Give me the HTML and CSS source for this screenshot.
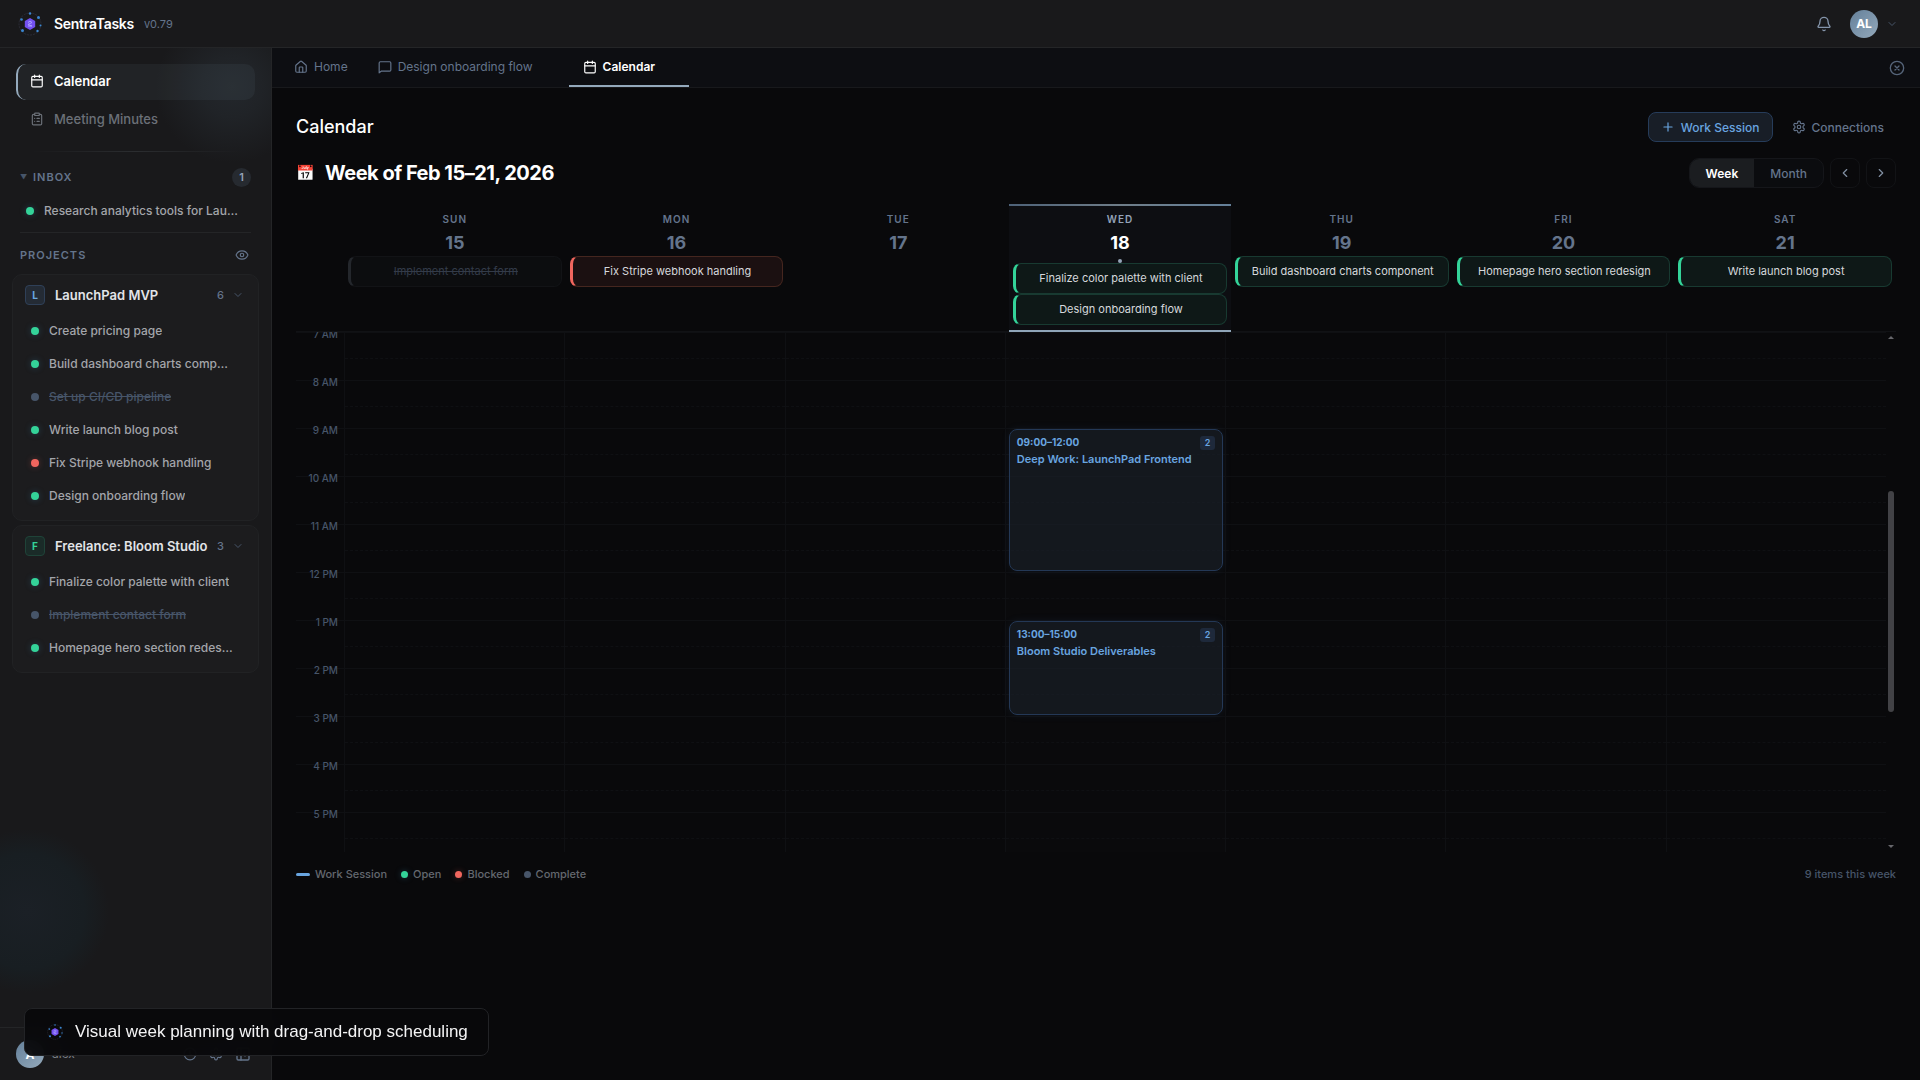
FILE: index.html
```html
<!DOCTYPE html>
<html lang="en">
<head>
  <meta charset="UTF-8" />
  <meta name="viewport" content="width=device-width, initial-scale=1.0"/>
  <title>SentraTasks - Calendar</title>
  <link rel="stylesheet" href="styles.css">
</head>
<body>
  <!-- shared icons -->
  <svg class="sprite" aria-hidden="true">
    <symbol id="i-logo" viewBox="0 0 24 24">
      <circle cx="12" cy="12" r="11" fill="none" stroke="#2c2d38" stroke-width="1" stroke-dasharray="2 1"/>
      <path d="M12 6l5.2 3v6L12 18l-5.2-3V9z" fill="#7350f0"/>
      <path d="M10 10.500l2-1.500 2 1.500-4 2 4 1.500h-4" fill="none" stroke="#a9a0ff" stroke-width="1"/>
      <g fill="#3a86d0">
        <circle cx="12" cy="1.500" r="1.200"/><circle cx="20.500" cy="5.500" r="1.500"/><circle cx="22.500" cy="13.500" r="1"/>
        <circle cx="19.500" cy="19" r="1.200"/><circle cx="4.500" cy="18.500" r="1.500"/><circle cx="3.500" cy="7.500" r="1.300"/>
      </g>
    </symbol>
    <symbol id="i-calendar" viewBox="0 0 24 24"><path d="M8 2v4M16 2v4M3 10h18"/><rect x="3" y="4" width="18" height="18" rx="2"/></symbol>
    <symbol id="i-clipboard" viewBox="0 0 24 24"><rect x="8" y="2" width="8" height="4" rx="1"/><path d="M16 4h2a2 2 0 0 1 2 2v14a2 2 0 0 1-2 2H6a2 2 0 0 1-2-2V6a2 2 0 0 1 2-2h2M12 11h4M12 16h4M8 11h.01M8 16h.01"/></symbol>
    <symbol id="i-home" viewBox="0 0 24 24"><path d="M15 21v-8a1 1 0 0 0-1-1h-4a1 1 0 0 0-1 1v8"/><path d="M3 10a2 2 0 0 1 .709-1.528l7-6a2 2 0 0 1 2.582 0l7 6A2 2 0 0 1 21 10v9a2 2 0 0 1-2 2H5a2 2 0 0 1-2-2z"/></symbol>
    <symbol id="i-message" viewBox="0 0 24 24"><path d="M22 17a2 2 0 0 1-2 2H6l-4 3V5a2 2 0 0 1 2-2h16a2 2 0 0 1 2 2z"/></symbol>
    <symbol id="i-bell" viewBox="0 0 24 24"><path d="M10.268 21a2 2 0 0 0 3.464 0M3.262 15.326A1 1 0 0 0 4 17h16a1 1 0 0 0 .740-1.673C19.410 13.956 18 12.499 18 8A6 6 0 0 0 6 8c0 4.499-1.411 5.956-2.738 7.326"/></symbol>
    <symbol id="i-down" viewBox="0 0 24 24"><path d="M6 9l6 6 6-6"/></symbol>
    <symbol id="i-left" viewBox="0 0 24 24"><path d="M15 18l-6-6 6-6"/></symbol>
    <symbol id="i-right" viewBox="0 0 24 24"><path d="M9 18l6-6-6-6"/></symbol>
    <symbol id="i-plus" viewBox="0 0 24 24"><path d="M5 12h14M12 5v14"/></symbol>
    <symbol id="i-close" viewBox="0 0 24 24"><circle cx="12" cy="12" r="10"/><path d="M15 9l-6 6M9 9l6 6"/></symbol>
    <symbol id="i-eye" viewBox="0 0 24 24"><path d="M2.062 12.348a1 1 0 0 1 0-.696 10.750 10.750 0 0 1 19.876 0 1 1 0 0 1 0 .696 10.750 10.750 0 0 1-19.876 0"/><circle cx="12" cy="12" r="3"/></symbol>
    <symbol id="i-help" viewBox="0 0 24 24"><circle cx="12" cy="12" r="10"/><path d="M12 6v6l3 2"/></symbol>
    <symbol id="i-panel" viewBox="0 0 24 24"><rect x="3" y="3" width="18" height="18" rx="2"/><path d="M9 3v18M15 9l-2 3 2 3"/></symbol>
    <symbol id="i-gear" viewBox="0 0 24 24"><path d="M12.220 2h-.440a2 2 0 0 0-2 2v.180a2 2 0 0 1-1 1.730l-.430.250a2 2 0 0 1-2 0l-.150-.080a2 2 0 0 0-2.730.730l-.220.380a2 2 0 0 0 .730 2.730l.150.100a2 2 0 0 1 1 1.720v.510a2 2 0 0 1-1 1.740l-.150.090a2 2 0 0 0-.730 2.730l.220.380a2 2 0 0 0 2.730.730l.150-.080a2 2 0 0 1 2 0l.430.250a2 2 0 0 1 1 1.730V20a2 2 0 0 0 2 2h.440a2 2 0 0 0 2-2v-.180a2 2 0 0 1 1-1.730l.430-.250a2 2 0 0 1 2 0l.150.080a2 2 0 0 0 2.730-.730l.220-.390a2 2 0 0 0-.730-2.730l-.150-.080a2 2 0 0 1-1-1.740v-.500a2 2 0 0 1 1-1.740l.150-.090a2 2 0 0 0 .730-2.730l-.220-.380a2 2 0 0 0-2.730-.730l-.150.080a2 2 0 0 1-2 0l-.430-.250a2 2 0 0 1-1-1.730V4a2 2 0 0 0-2-2z"/><circle cx="12" cy="12" r="3"/></symbol>
  </svg>

  <header class="topbar">
    <svg class="logo"><use href="#i-logo"/></svg>
    <span class="brand">SentraTasks</span>
    <span class="version">v0.79</span>
    <button class="bell" aria-label="Notifications"><svg class="icon icon-md"><use href="#i-bell"/></svg></button>
    <button class="account" aria-label="Account">
      <span class="avatar">AL</span>
      <svg class="icon icon-sm"><use href="#i-down"/></svg>
    </button>
  </header>

  <div class="shell">
    <aside class="sidebar">
      <nav class="side-nav">
        <a class="side-link active" href="#calendar"><svg class="icon"><use href="#i-calendar"/></svg>Calendar</a>
        <a class="side-link" href="#minutes"><svg class="icon"><use href="#i-clipboard"/></svg>Meeting Minutes</a>
      </nav>

      <section class="inbox">
        <h2 class="side-heading"><span class="caret">▼</span>INBOX<span class="count-badge">1</span></h2>
        <a class="task" href="#task"><span class="dot open"></span><span class="task-name">Research analytics tools for LaunchPad</span></a>
      </section>

      <h2 class="side-heading projects-heading">PROJECTS<button aria-label="Show completed"><svg class="icon"><use href="#i-eye"/></svg></button></h2>

      <section class="project">
        <button class="project-head"><span class="project-badge blue">L</span><span class="project-name">LaunchPad MVP</span><span class="project-count">6</span><svg class="icon icon-sm"><use href="#i-down"/></svg></button>
        <a class="task" href="#task"><span class="dot open"></span><span class="task-name">Create pricing page</span></a>
        <a class="task" href="#task"><span class="dot open"></span><span class="task-name">Build dashboard charts component</span></a>
        <a class="task done" href="#task"><span class="dot complete"></span><span class="task-name">Set up CI/CD pipeline</span></a>
        <a class="task" href="#task"><span class="dot open"></span><span class="task-name">Write launch blog post</span></a>
        <a class="task" href="#task"><span class="dot blocked"></span><span class="task-name">Fix Stripe webhook handling</span></a>
        <a class="task" href="#task"><span class="dot open"></span><span class="task-name">Design onboarding flow</span></a>
      </section>

      <section class="project">
        <button class="project-head"><span class="project-badge green">F</span><span class="project-name">Freelance: Bloom Studio</span><span class="project-count">3</span><svg class="icon icon-sm"><use href="#i-down"/></svg></button>
        <a class="task" href="#task"><span class="dot open"></span><span class="task-name">Finalize color palette with client</span></a>
        <a class="task done" href="#task"><span class="dot complete"></span><span class="task-name">Implement contact form</span></a>
        <a class="task" href="#task"><span class="dot open"></span><span class="task-name">Homepage hero section redesign</span></a>
      </section>

      <footer class="side-footer">
        <span class="avatar">A</span>
        <span class="user-name">alex</span>
        <button aria-label="Help"><svg class="icon"><use href="#i-help"/></svg></button>
        <button aria-label="Settings"><svg class="icon"><use href="#i-gear"/></svg></button>
        <button aria-label="Collapse sidebar"><svg class="icon icon-md"><use href="#i-panel"/></svg></button>
      </footer>
    </aside>

    <main class="main">
      <nav class="tabs">
        <a class="tab" href="#home"><svg class="icon"><use href="#i-home"/></svg>Home</a>
        <a class="tab closable" href="#task"><svg class="icon"><use href="#i-message"/></svg>Design onboarding flow</a>
        <a class="tab closable active" href="#calendar"><svg class="icon"><use href="#i-calendar"/></svg>Calendar</a>
        <button class="close-all" aria-label="Close all tabs"><svg class="icon icon-md"><use href="#i-close"/></svg></button>
      </nav>

      <div class="page">
        <div class="page-row">
          <h1 class="page-title">Calendar</h1>
          <button class="btn primary"><svg class="icon"><use href="#i-plus"/></svg>Work Session</button>
          <button class="btn"><svg class="icon"><use href="#i-gear"/></svg>Connections</button>
        </div>

        <div class="page-row week-row">
          <span class="week-icon">📅</span>
          <h2 class="week-title">Week of Feb 15–21, 2026</h2>
          <div class="segmented">
            <button class="active">Week</button>
            <button>Month</button>
          </div>
          <button class="nav-btn" aria-label="Previous week"><svg class="icon"><use href="#i-left"/></svg></button>
          <button class="nav-btn" aria-label="Next week"><svg class="icon"><use href="#i-right"/></svg></button>
        </div>

        <div class="week-head">
          <div class="day-head"><span class="day-name">SUN</span><span class="day-num">15</span><a class="chip complete" href="#task">Implement contact form</a></div>
          <div class="day-head"><span class="day-name">MON</span><span class="day-num">16</span><a class="chip blocked" href="#task">Fix Stripe webhook handling</a></div>
          <div class="day-head"><span class="day-name">TUE</span><span class="day-num">17</span></div>
          <div class="day-head today"><span class="day-name">WED</span><span class="day-num">18</span><span class="today-dot"></span><a class="chip" href="#task">Finalize color palette with client</a><a class="chip" href="#task">Design onboarding flow</a></div>
          <div class="day-head"><span class="day-name">THU</span><span class="day-num">19</span><a class="chip" href="#task">Build dashboard charts component</a></div>
          <div class="day-head"><span class="day-name">FRI</span><span class="day-num">20</span><a class="chip" href="#task">Homepage hero section redesign</a></div>
          <div class="day-head"><span class="day-name">SAT</span><span class="day-num">21</span><a class="chip" href="#task">Write launch blog post</a></div>
        </div>

        <div class="week-view">
          <div id="week-scroll" class="week-scroll">
            <div id="week-body" class="week-body"></div>
          </div>
          <div class="scrollbar" aria-hidden="true">
            <span class="arrow up"></span>
            <div class="track"><div id="thumb" class="thumb"></div></div>
            <span class="arrow down"></span>
          </div>
        </div>

        <div class="legend">
          <span class="key"><span class="bar"></span>Work Session</span>
          <span class="key"><span class="dot open"></span>Open</span>
          <span class="key"><span class="dot blocked"></span>Blocked</span>
          <span class="key"><span class="dot complete"></span>Complete</span>
          <span class="total">9 items this week</span>
        </div>
      </div>
    </main>
  </div>

  <div class="toast" role="status"><svg class="toast-logo"><use href="#i-logo"/></svg>Visual week planning with drag-and-drop scheduling</div>

  <script>
const HOUR = 48;
const FIRST_VISIBLE_HOUR = 7;
const weekBody = document.getElementById('week-body');
const weekScroll = document.getElementById('week-scroll');
const thumb = document.getElementById('thumb');

const sessions = [
  { day: 3, start: 9, end: 12, title: 'Deep Work: LaunchPad Frontend', tasks: 2 },
  { day: 3, start: 13, end: 15, title: 'Bloom Studio Deliverables', tasks: 2 }
];

function hourLabel(h) {
  return `${h % 12 || 12} ${h < 12 ? 'AM' : 'PM'}`;
}

function clock(h) {
  return String(h).padStart(2, '0') + ':00';
}

// Hour labels on the left
let html = '<div class="hours">';
for (let h = 0; h < 24; h++) {
  html += `<div class="hour"><span>${hourLabel(h)}</span></div>`;
}
html += '</div>';

// Day columns with their sessions
for (let d = 0; d < 7; d++) {
  html += `<div class="day-col${d === 3 ? ' today' : ''}">`;
  html += '<div class="slot"></div>'.repeat(24);
  sessions.filter(s => s.day === d).forEach(s => {
    const top = s.start * HOUR + 1;
    const height = (s.end - s.start) * HOUR - 2;
    html += `<a class="session" href="#session" style="top: ${top}px; height: ${height}px">
      <span class="session-time">${clock(s.start)}–${clock(s.end)}</span><span class="session-count">${s.tasks}</span>
      <span class="session-title">${s.title}</span></a>`;
  });
  html += '</div>';
}
weekBody.innerHTML = html;

// Keep the thumb in step with the grid
function moveThumb() {
  const total = weekScroll.scrollHeight;
  thumb.style.height = (weekScroll.clientHeight / total * 100) + '%';
  thumb.style.top = (weekScroll.scrollTop / total * 100) + '%';
}

weekScroll.addEventListener('scroll', moveThumb);
weekScroll.scrollTop = FIRST_VISIBLE_HOUR * HOUR;
moveThumb();
  </script>
</body>
</html>
```
FILE: styles.css
```css
* {
  box-sizing: border-box;
}

body {
  margin: 0;
  min-height: 100vh;
  display: flex;
  flex-direction: column;
  font-family: Inter, sans-serif;
  font-size: 13px;
  color: #e4e6ea;
  background-color: #09090b;
}

h1, h2 {
  margin: 0;
}

a {
  color: inherit;
  text-decoration: none;
}

button {
  margin: 0;
  padding: 0;
  border: none;
  background: none;
  color: inherit;
  font: inherit;
  cursor: pointer;
  display: inline-flex;
  align-items: center;
  justify-content: center;
}

.sprite {
  display: none;
}

.icon {
  width: 14px;
  height: 14px;
  flex: none;
  fill: none;
  stroke: currentColor;
  stroke-width: 2;
  stroke-linecap: round;
  stroke-linejoin: round;
}

.icon-md { width: 16px; height: 16px; }
.icon-sm { width: 12px; height: 12px; }

.avatar {
  width: 28px;
  height: 28px;
  flex: none;
  display: flex;
  align-items: center;
  justify-content: center;
  border-radius: 50%;
  background: linear-gradient(135deg, #64809a, #94a9bb);
  color: #fff;
  font-size: 12px;
  font-weight: 700;
}

/* Top bar */
.topbar {
  height: 48px;
  display: flex;
  align-items: center;
  padding: 0 22px 0 18px;
  background-color: #19191b;
  border-bottom: 1px solid #242527;
}

.logo {
  width: 24px;
  height: 24px;
}

.brand {
  margin-left: 12px;
  font-size: 14px;
  font-weight: 600;
  letter-spacing: -0.02em;
  color: #fff;
}

.version {
  margin-left: 10px;
  font-size: 11px;
  color: #64748b;
}

.bell {
  margin-left: auto;
  color: #8494aa;
}

.bell .icon,
.close-all .icon {
  stroke-width: 2;
}

.account {
  margin-left: 18px;
  gap: 8px;
  color: #475569;
}

/* Sidebar */
.shell {
  flex: 1;
  display: flex;
}

.sidebar {
  width: 272px;
  flex: none;
  display: flex;
  flex-direction: column;
  border-right: 1px solid #242527;
  background:
    radial-gradient(circle 76px at 232px 39px, #23272c, #202327 40%, rgba(25, 25, 27, 0)),
    radial-gradient(circle 82px at 27px 863px, #1b2026, #181e22 70%, rgba(25, 25, 27, 0)),
    #19191b;
}

.side-nav {
  padding: 16px 16px 15px;
  display: flex;
  flex-direction: column;
  gap: 2px;
}

.side-nav::after {
  content: "";
  height: 1px;
  margin: 11px 16px 0;
  background: linear-gradient(90deg, transparent, #2b2d30, transparent);
}

.side-link {
  height: 36px;
  display: flex;
  align-items: center;
  gap: 10px;
  padding: 0 12px 2px;
  border-left: 2px solid transparent;
  border-radius: 10px;
  font-weight: 500;
  color: #6b7078;
}

.side-link.active {
  border-left-color: #94a9bc;
  background-color: rgba(148, 168, 190, 0.07);
  font-weight: 600;
  color: #fff;
}

.side-heading {
  height: 20px;
  display: flex;
  align-items: center;
  margin: 0 20px;
  font-size: 11px;
  font-weight: 600;
  letter-spacing: 1px;
  color: #64748b;
}

.caret {
  width: 13px;
  font-size: 7px;
  color: #475569;
  letter-spacing: 0;
}

.count-badge {
  margin-left: auto;
  width: 19px;
  height: 19px;
  display: flex;
  align-items: center;
  justify-content: center;
  border-radius: 50%;
  background-color: #262a30;
  color: #94a3b8;
  letter-spacing: 0;
}

.inbox {
  margin-bottom: 12px;
}

.inbox .task {
  margin: 8px 20px 0;
  height: 38px;
  padding: 0 10px 5px 6px;
  border-bottom: 1px solid #242527;
}

.task {
  height: 33px;
  display: flex;
  align-items: center;
  gap: 10px;
  padding: 0 24px 0 18px;
  font-size: 12px;
  font-weight: 500;
  color: #a3a5aa;
}

.task-name {
  overflow: hidden;
  white-space: nowrap;
  text-overflow: ellipsis;
  line-height: 18px;
}

.task.done {
  color: #475569;
  text-decoration: line-through;
}

.dot {
  width: 8px;
  height: 8px;
  flex: none;
  border-radius: 50%;
}

.dot.open { background-color: #34d399; box-shadow: 0 0 6px rgba(52, 120, 153, 0.4); }
.dot.blocked { background-color: #f0665e; box-shadow: 0 0 6px rgba(240, 102, 94, 0.3); }
.dot.complete { background-color: #475569; }

.projects-heading {
  margin-bottom: 9px;
}

.projects-heading button {
  margin-left: auto;
  margin-right: 2px;
}

.project {
  margin: 0 12px 4px;
  padding-bottom: 8px;
  border: 1px solid #212224;
  border-radius: 10px;
  background-color: #1c1c1e;
}

.project-head {
  width: 100%;
  height: 39px;
  padding: 0 14px 0 12px;
  color: #475569;
}

.project-badge {
  width: 20px;
  height: 20px;
  flex: none;
  display: flex;
  align-items: center;
  justify-content: center;
  border-radius: 4px;
  font-size: 10px;
  font-weight: 700;
}

.project-badge.blue { color: #6aa8e0; background-color: #242b35; border: 1px solid #2f4058; }
.project-badge.green { color: #34d399; background-color: #1a2b28; border: 1px solid #1f4338; }

.project-name {
  margin-left: 10px;
  font-weight: 600;
  color: #e2e4e8;
}

.project-count {
  margin-left: auto;
  margin-right: 8px;
  font-size: 11px;
  font-weight: 500;
  color: #64748b;
}

.side-footer {
  height: 53px;
  margin-top: auto;
  padding: 0 20px 0 16px;
  display: flex;
  align-items: center;
  gap: 12px;
  border-top: 1px solid #242527;
  color: #64748b;
}

.user-name {
  margin: 0 auto 0 -4px;
  padding-bottom: 2px;
  font-size: 12px;
  color: #7c8088;
}

/* Tabs */
.main {
  flex: 1;
  min-width: 0;
}

.tabs {
  height: 40px;
  display: flex;
  gap: 2px;
  padding: 0 15px 0 8px;
  background-color: #0d0e12;
  border-bottom: 1px solid #18191c;
}

.tab {
  display: flex;
  align-items: center;
  gap: 6px;
  padding: 0 14px;
  border-bottom: 2px solid transparent;
  font-size: 12px;
  color: #64748b;
}

.tab.closable {
  padding-right: 34px;
}

.tab.active {
  border-bottom-color: #94a9bc;
  font-weight: 600;
  color: #fff;
}

.close-all {
  margin-left: auto;
  color: #56657a;
}

/* Calendar page */
.page {
  padding: 24px;
}

.page-row {
  display: flex;
  align-items: center;
  margin-bottom: 16px;
}

.page-title {
  margin-right: auto;
  padding-bottom: 2px;
  font-size: 18px;
  font-weight: 500;
  color: #fff;
}

.btn {
  height: 30px;
  padding: 0 11px;
  gap: 6px;
  border: 1px solid transparent;
  border-radius: 8px;
  font-size: 12px;
  font-weight: 500;
  color: #64748b;
}

.btn.primary {
  margin-right: 7px;
  padding: 0 12px;
  border-color: #263c5a;
  background-color: #181e27;
  color: #69a5e0;
}

.week-row {
  gap: 6px;
}

.week-icon {
  width: 23px;
  font-size: 15px;
  line-height: 20px;
}

.week-title {
  margin-right: auto;
  font-size: 20px;
  font-weight: 700;
  letter-spacing: -0.025em;
  color: #fff;
}

.segmented {
  display: flex;
  overflow: hidden;
  height: 30px;
  border: 1px solid #15161a;
  border-radius: 10px;
  background-color: #0b0c0f;
}

.segmented button {
  padding: 0 16px;
  font-size: 12px;
  font-weight: 500;
  color: #64748b;
}

.segmented .active {
  background-color: #1b1d20;
  font-weight: 600;
  color: #fff;
}

.nav-btn {
  width: 30px;
  height: 30px;
  border: 1px solid #121316;
  border-radius: 8px;
  color: #8290a3;
}

.week-head {
  display: grid;
  grid-template-columns: repeat(7, minmax(0, 1fr));
  padding-left: 48px;
  border-bottom: 1px solid #111215;
}

.day-head {
  display: flex;
  flex-direction: column;
  align-items: stretch;
  padding: 9px 4px 6px;
  text-align: center;
}

.day-head.today {
  margin-bottom: -1px;
  padding-top: 7px;
  padding-bottom: 7px;
  border-top: 2px solid #64809a;
  border-image: linear-gradient(90deg, #4d6178, #6f7d88, #64809a) 1;
  border-width: 2px 0 0;
  background-color: #0d0e12;
  box-shadow: inset 0 -2px #8fa5b8;
}

.day-name {
  font-size: 10px;
  line-height: 12px;
  font-weight: 600;
  letter-spacing: 1px;
  color: #64748b;
}

.day-num {
  margin-top: 7px;
  font-size: 18px;
  line-height: 22px;
  font-weight: 700;
  color: #64748b;
}

.today .day-name { color: #94a3b8; }
.today .day-num { color: #fff; }

.today-dot {
  align-self: center;
  width: 4px;
  height: 4px;
  margin-top: 5px;
  border-radius: 50%;
  background-color: #94a3b8;
}

.day-num + .chip {
  margin-top: 2px;
}

.chip {
  height: 31px;
  padding: 0 8px;
  overflow: hidden;
  white-space: nowrap;
  text-overflow: ellipsis;
  border: 1px solid #183a31;
  border-left: 3px solid #34d399;
  border-radius: 8px;
  background-color: #0e1817;
  font-size: 11px;
  line-height: 29px;
  color: #d6d8dc;
}

.chip.blocked {
  border-color: #45261f;
  border-left-color: #f0665e;
  background-color: #1b1011;
}

.chip.complete {
  border-color: #121316;
  border-left-color: #24272c;
  background-color: #0c0d0f;
  color: #333b49;
  text-decoration: line-through;
}

.week-view {
  display: flex;
  height: 520px;
}

.week-scroll {
  flex: 1;
  min-width: 0;
  overflow-y: scroll;
  scrollbar-width: none;
}

.week-body {
  display: grid;
  grid-template-columns: 48px repeat(7, minmax(0, 1fr));
}

.scrollbar {
  width: 10px;
  padding: 4px 2px;
  display: flex;
  flex-direction: column;
}

.arrow {
  border: 3px solid transparent;
}

.arrow.up {
  border-top-width: 0;
  border-bottom-color: #66666b;
}

.arrow.down {
  border-bottom-width: 0;
  border-top-color: #66666b;
}

.track {
  position: relative;
  flex: 1;
  margin: 9px 0 7px;
}

.thumb {
  position: absolute;
  left: 0;
  right: 0;
  border-radius: 3px;
  background-color: #424246;
}

.hour {
  height: 48px;
  padding-right: 6px;
  border-top: 1px solid #0f1013;
  text-align: right;
}

.hour span {
  display: block;
  margin-top: -6px;
  font-size: 10px;
  line-height: 14px;
  font-weight: 500;
  color: #475569;
}

.day-col {
  position: relative;
  border-left: 1px solid #0f1013;
}

.day-col.today {
  background-color: #0a0a0c;
}

.slot {
  height: 48px;
  border-top: 1px solid #0f1013;
}

.slot::before {
  content: "";
  display: block;
  height: 25px;
  border-bottom: 1px dashed #0f1013;
}

.session {
  position: absolute;
  left: 3px;
  right: 2px;
  display: grid;
  grid-template-columns: 1fr auto;
  align-content: start;
  row-gap: 2px;
  padding: 5px 7px;
  border: 1px solid #243856;
  border-radius: 8px;
  background-color: rgba(26, 34, 44, 0.6);
  box-shadow: 0 0 8px rgba(80, 130, 200, 0.1);
  font-size: 11px;
  line-height: 15px;
  font-weight: 600;
  color: #69a5e0;
}

.session-time {
  font-size: 10px;
  font-weight: 700;
}

.session-count {
  width: 15px;
  height: 14px;
  margin-top: 1px;
  border-radius: 3px;
  background-color: #1e293b;
  font-size: 9px;
  line-height: 14px;
  text-align: center;
}

.session-title {
  grid-column: 1 / -1;
}

/* Legend under the grid */
.legend {
  display: flex;
  align-items: center;
  gap: 14px;
  margin-top: 14px;
  font-size: 11px;
  line-height: 16px;
  font-weight: 500;
  color: #64686f;
}

.legend .key {
  display: flex;
  align-items: center;
  gap: 5px;
}

.legend .dot {
  width: 7px;
  height: 7px;
}

.legend .bar {
  width: 14px;
  height: 3px;
  border-radius: 2px;
  background-color: #69a5e0;
}

.legend .total {
  margin-left: auto;
  color: #475569;
}

/* Floating message */
.toast {
  position: fixed;
  left: 24px;
  bottom: 24px;
  height: 48px;
  display: flex;
  align-items: center;
  gap: 12px;
  padding: 0 20px 0 22px;
  border: 1px solid #222326;
  border-radius: 8px;
  background-color: rgba(9, 9, 11, 0.94);
  backdrop-filter: blur(12px);
  font-family: "Liberation Sans", Arial, sans-serif;
  font-size: 17px;
  color: #f4f4f5;
}

.toast-logo {
  width: 16px;
  height: 16px;
}
```
